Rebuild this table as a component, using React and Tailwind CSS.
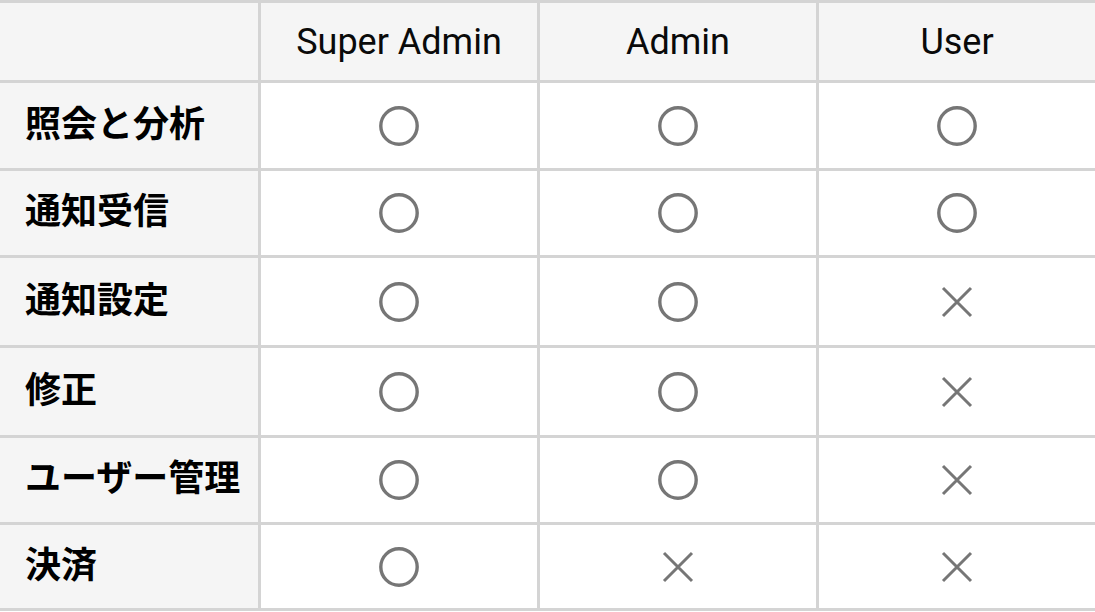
import React from 'react';

const roles = ['Super Admin', 'Admin', 'User'];

const rows = [
  { label: '照会と分析', perms: [true, true, true] },
  { label: '通知受信', perms: [true, true, true] },
  { label: '通知設定', perms: [true, true, false] },
  { label: '修正', perms: [true, true, false] },
  { label: 'ユーザー管理', perms: [true, true, false] },
  { label: '決済', perms: [true, false, false] },
];

function Yes() {
  return (
    <svg width="42" height="42" viewBox="0 0 42 42">
      <circle cx="21" cy="21" r="18.2" fill="none" stroke="#767676" strokeWidth="3.4" />
    </svg>
  );
}

function No() {
  return (
    <svg width="34" height="34" viewBox="0 0 34 34">
      <path d="M3 3 L31 31 M31 3 L3 31" stroke="#767676" strokeWidth="3" fill="none" />
    </svg>
  );
}

export default function App() {
  return (
    <div className="w-[1095px] h-[612px] bg-white overflow-hidden">
      <div className="grid grid-cols-[258px_276px_276px_276px] grid-rows-[77px_85px_84px_87px_87px_84px_83px] gap-[3px] pt-[3px] pb-[3px] bg-[#d4d4d4]">
        <div className="bg-[#f5f5f5]" />
        {roles.map((r) => (
          <div
            key={r}
            className="bg-[#f5f5f5] flex items-center justify-center text-[36px] leading-none text-[#0a0a0a] font-['Roboto',sans-serif]"
          >
            {r}
          </div>
        ))}
        {rows.map((row) => (
          <React.Fragment key={row.label}>
            <div className="bg-[#f5f5f5] flex items-center pl-[25px] pb-[10px] text-[36px] leading-none font-bold text-black font-['Noto_Sans_CJK_JP',sans-serif]">
              {row.label}
            </div>
            {row.perms.map((p, i) => (
              <div key={i} className="bg-white flex items-center justify-center">
                {p ? <Yes /> : <No />}
              </div>
            ))}
          </React.Fragment>
        ))}
      </div>
    </div>
  );
}
